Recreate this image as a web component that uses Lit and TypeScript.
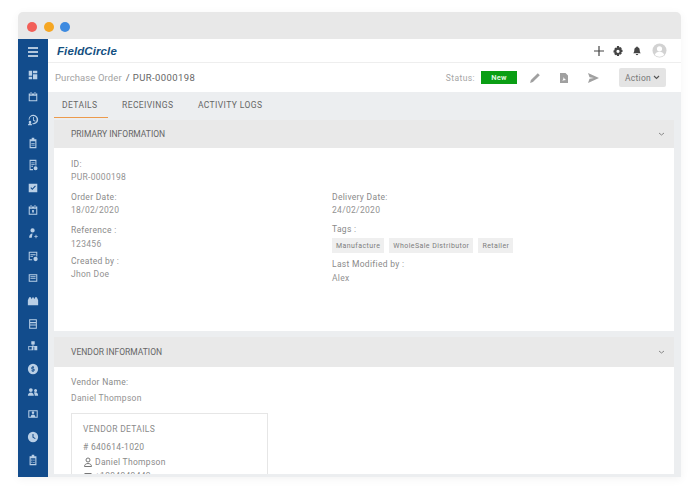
import { LitElement, html, css, svg } from 'lit';
import { customElement } from 'lit/decorators.js';

// sidebar glyphs, 14x14 box, drawn in the light blue of the menu
const sideIcons = [
  svg`<path d="M2 2h4v6H2zM7 2h5v3H7zM7 6h5v6H7zM2 9h4v3H2z"/>`,
  svg`<path fill-rule="evenodd" d="M2 3h10v9H2zM3.200 5.500v5.300h7.600V5.500zM4 1.500h1.400V4H4zM8.600 1.500H10V4H8.600z"/>`,
  svg`<path fill-rule="evenodd" d="M7.500 1a5.500 5.500 0 1 1-1 10.900V10.600a4.200 4.200 0 1 0-3.600-3.800H1.900A5.600 5.600 0 0 1 7.500 1zM7 3.500h1V7l2 1-.5.900L7 7.600zM3.500 8a1.500 1.500 0 1 1 0 3 1.500 1.500 0 0 1 0-3zM1 13c0-1.300 1-2 2.500-2S6 11.700 6 13z"/>`,
  svg`<path fill-rule="evenodd" d="M5.500 1h3v1.500H11V13H3V2.500h2.500zM4.300 5v6.700h5.400V5zM5 7h4v1H5zM5 9h4v1H5z"/>`,
  svg`<path fill-rule="evenodd" d="M3 1h8v6.500H9.800V2.200H4.200v9.600H7V13H3zM5 4h4v1H5zM5 6h4v1H5zM5 8h2v1H5zM10 8.500a2.300 2.300 0 1 1 0 4.600 2.300 2.300 0 0 1 0-4.600z"/>`,
  svg`<path fill-rule="evenodd" d="M2 2h10v10H2zM4 7l2.200 2.400L10.300 5l-.9-.8-3.200 3.500L4.900 6.200z"/>`,
  svg`<path fill-rule="evenodd" d="M2 3h10v9.500H2zM3.200 5.500v5.800h7.600V5.500zM4 1.500h1.400V4H4zM8.600 1.500H10V4H8.600zM6 7h2v3H6z"/>`,
  svg`<path d="M6.500 1.500a2.500 2.500 0 1 1 0 5 2.500 2.500 0 0 1 0-5zM2.500 12.500c0-3 1.500-5 4-5l-1 5zM10 9h1v1.500h1.500v1H11V13h-1v-1.500H8.500v-1H10z"/>`,
  svg`<path fill-rule="evenodd" d="M2 2h10v5.500h-1.200V3.200H3.200v7.600H6V12H2zM4 5h6v1H4zM4 7h3v1H4zM10 8a2.500 2.500 0 1 1 0 5 2.500 2.500 0 0 1 0-5z"/>`,
  svg`<path fill-rule="evenodd" d="M2 2.500h10v9H2zM3.200 3.700v6.600h7.600V3.700zM4 5h6v1H4zM4 7h6v1H4z"/>`,
  svg`<path d="M1 6l1.500-3.500h2L5.500 5l1-2.500h1L8.500 5l1-2.500h2L13 6v6H1z"/>`,
  svg`<path fill-rule="evenodd" d="M2.500 1.500h9v11h-9zM3.700 2.700v2.100h6.600V2.700zM3.700 6v1.500h6.600V6zM3.700 8.700v2.600h6.600V8.700z"/>`,
  svg`<path d="M5 1.500h4v3.700H7.500V7H12v5H8.500V8H7.500v4H1.500V7h5V5.200H5zM2.500 8v3h3V8z"/>`,
  svg`<path fill-rule="evenodd" d="M7 1a6 6 0 1 1 0 12A6 6 0 0 1 7 1zM6.400 3.500v1C5.400 4.700 5 5.300 5 6c0 1.900 3 1.400 3 2.300 0 .7-1.500.6-2.400 0l-.4 1c.3.200.7.400 1.200.4v.8h1.200v-.9c.9-.2 1.400-.8 1.400-1.500C9 6.300 6 6.800 6 5.900c0-.6 1.200-.6 2-.2l.3-1a3 3 0 0 0-.8-.2v-1z"/>`,
  svg`<path d="M4.500 2.500a2.200 2.200 0 1 1 0 4.400 2.200 2.200 0 0 1 0-4.400zM10 3.500a1.800 1.800 0 1 1 0 3.600 1.800 1.800 0 0 1 0-3.600zM1 11.500c0-2.600 1.400-4 3.500-4S8 8.900 8 11.500zM9 11.500c0-1.500-.2-2.700-1-3.700.6-.3 1.300-.5 2-.5 1.800 0 3 1.500 3 4.200z"/>`,
  svg`<path fill-rule="evenodd" d="M1.500 2.500h11v9h-11zM2.700 3.700v6.600h1.600C4.500 8.500 5.500 7.500 7 7.500s2.500 1 2.700 2.800h1.600V3.700zM7 4a1.500 1.500 0 1 1 0 3 1.500 1.500 0 0 1 0-3z"/>`,
  svg`<path fill-rule="evenodd" d="M7 1a6 6 0 1 1 0 12A6 6 0 0 1 7 1zM6.400 3.500v4.200l3 1.700.6-1-2.400-1.400V3.500z"/>`,
  svg`<path fill-rule="evenodd" d="M5.500 1h3v1.500H11V13H3V2.500h2.500zM4.300 5v6.700h5.400V5zM5 6.500h1.300v1.300H5zM7.200 6.800H9v.8H7.200zM5 9h1.300v1.300H5zM7.200 9.300H9v.8H7.200z"/>`,
];

@customElement('app-root')
export class AppRoot extends LitElement {
  static styles = css`
    :host {
      display: block;
      width: 694px;
      height: 495px;
      box-sizing: border-box;
      padding: 12px 13px 18px 18px;
      background: #fff;
      font-family: Roboto, "Liberation Sans", sans-serif;
      font-size: 8.5px;
      letter-spacing: 0.3px;
      color: #777;
    }
    .window {
      height: 100%;
      display: flex;
      flex-direction: column;
      border-radius: 5px 5px 0 0;
      overflow: hidden;
      box-shadow: 0 2px 10px rgba(0, 0, 0, 0.05);
    }
    .titlebar {
      flex: 0 0 27px;
      box-sizing: border-box;
      padding: 2px 0 0 9px;
      background: #e8e8e8;
      display: flex;
      align-items: center;
      gap: 6.500px;
    }
    .dot { width: 10px; height: 10px; border-radius: 50%; }
    .body { flex: 1; display: flex; min-height: 0; }
    .side {
      flex: 0 0 30px;
      background: #124c8c;
      display: flex;
      flex-direction: column;
      align-items: center;
      padding-top: 7px;
      gap: 10.650px;
    }
    .side svg { width: 12px; height: 12px; fill: #b9cfe6; display: block; }
    .side .burger { width: 14px; fill: none; stroke: #e6eef6; stroke-width: 1.300; }
    .content { flex: 1; min-width: 0; display: flex; flex-direction: column; background: #eceef0; }

    .topbar {
      flex: 0 0 23px;
      background: #fff;
      border-bottom: 1px solid #eee;
      display: flex;
      align-items: center;
      padding: 0 14px 0 9px;
    }
    .logo {
      font-family: "Liberation Sans", sans-serif;
      font-weight: 700;
      font-style: italic;
      font-size: 11.500px;
      letter-spacing: 0.1px;
      color: #14507f;
    }
    .top-icons { margin-left: auto; display: flex; align-items: center; gap: 7px; }
    .top-icons svg { display: block; fill: #444; }
    .top-icons .avatar { margin-left: 2px; }

    .subbar {
      flex: 0 0 29px;
      background: #fff;
      display: flex;
      align-items: center;
      padding: 0 15px 0 7px;
      font-size: 9.500px;
    }
    .crumb { color: #a2a2a2; letter-spacing: 0.1px; }
    .crumb-id { color: #666; margin-left: 4px; letter-spacing: 0.4px; }
    .status { margin-left: auto; color: #a5a5a5; font-size: 8.500px; letter-spacing: 0.4px; }
    .badge {
      margin-left: 6px;
      width: 36px;
      height: 13px;
      background: #0a9e14;
      color: #dff5df;
      font-size: 7.500px;
      font-weight: 700;
      display: flex;
      align-items: center;
      justify-content: center;
    }
    .actions { display: flex; align-items: center; gap: 17px; margin: 0 19px 0 12px; }
    .actions svg { display: block; fill: #a0a0a0; }
    .action-btn {
      width: 47px;
      height: 19px;
      background: #e4e4e4;
      border-radius: 2px;
      color: #777;
      display: flex;
      align-items: center;
      justify-content: center;
      gap: 2px;
      font-size: 8.500px;
    }

    .scroll { flex: 1; min-height: 0; padding: 0 7px 0 6px; }
    .tabs { height: 26px; display: flex; margin-bottom: 2px; }
    .tab {
      display: flex;
      align-items: center;
      padding: 0 10px 0 8px;
      margin-right: 6.500px;
      color: #666;
      letter-spacing: 0.4px;
    }
    .tab.on { border-bottom: 1px solid #ec9a4c; padding-top: 1px; }

    .panel-head {
      display: flex;
      align-items: center;
      justify-content: space-between;
      padding: 0 9px 0 17px;
      background: #e9e9e9;
      color: #666;
      height: 28px;
      letter-spacing: 0;
    }
    .panel-head.second { height: 30px; margin-top: 6px; }
    .panel-body { background: #fff; padding: 10px 17px 0; height: 173px; }
    .panel-body.vendor { height: 100px; padding-top: 7px; overflow: hidden; }

    .field { line-height: 13px; margin-bottom: 6px; color: #8a8a8a; }
    .field .val { color: #929292; }
    .field.first { margin-bottom: 7px; }
    .field.after-ref { margin-bottom: 4px; }
    .cols { display: grid; grid-template-columns: 261px 1fr; }
    .gap-val { line-height: 14px; }
    .tags { display: flex; gap: 5px; margin: 2px 0 4px; }
    .tag {
      height: 15px;
      padding: 0 4px;
      background: #efefef;
      font-size: 7px;
      letter-spacing: 0.42px;
      display: flex;
      align-items: center;
      color: #7d7d7d;
    }
    .tight { margin-bottom: 0; }
    .vendor-name { line-height: 16px; margin-bottom: 7px; color: #8a8a8a; }
    .vendor-name .val { color: #929292; }
    .card {
      width: 197px;
      box-sizing: border-box;
      border: 1px solid #e6e6e6;
      padding: 8px 11px;
      line-height: 15px;
      color: #8a8a8a;
    }
    .card-row { display: flex; align-items: center; gap: 2px; height: 14.500px; }
    .card-row svg { display: block; fill: none; stroke: #777; stroke-width: 1; }
  `;

  render() {
    return html`
      <div class="window">
        <div class="titlebar">
          <div class="dot" style="background:#f25f58"></div>
          <div class="dot" style="background:#f5a623"></div>
          <div class="dot" style="background:#3d8ae0"></div>
        </div>
        <div class="body">
          <div class="side">
            <svg class="burger" viewBox="0 0 14 12"><path d="M2 2h10M2 6h10M2 10h10"/></svg>
            ${sideIcons.map((p) => html`<svg viewBox="0 0 14 14">${p}</svg>`)}
          </div>
          <div class="content">
            <div class="topbar">
              <span class="logo">FieldCircle</span>
              <div class="top-icons">
                <svg width="12" height="12" viewBox="0 0 12 12"><path d="M5.400 1h1.200v4.400H11v1.200H6.600V11H5.400V6.600H1V5.400h4.400z"/></svg>
                <svg width="12" height="12" viewBox="0 0 12 12"><path fill-rule="evenodd" d="M5 1h2l.3 1.400 1-.5 1.500 1.400-.6 1 1.300.6v2l-1.300.4.6 1.100-1.500 1.400-1-.6L7 11H5l-.3-1.300-1 .6-1.500-1.400.6-1.100L1.500 7.500v-2l1.300-.6-.6-1 1.500-1.400 1 .5zM6 4.700a1.600 1.600 0 1 0 0 3.200 1.600 1.600 0 0 0 0-3.200z"/></svg>
                <svg width="12" height="12" viewBox="0 0 12 12"><path d="M6 1.500c.5 0 .8.300.8.700C8.200 2.600 8.700 3.700 8.700 5.200c0 1.700.6 2.400 1.100 3H2.200c.5-.6 1.100-1.300 1.100-3 0-1.500.5-2.600 1.900-3 0-.4.300-.7.800-.7zM4.800 9h2.400c0 .7-.5 1.200-1.200 1.200S4.800 9.700 4.800 9z"/></svg>
                <svg class="avatar" width="15" height="15" viewBox="0 0 15 15"><circle cx="7.500" cy="7.500" r="7" fill="#d2d2d2"/><circle cx="7.500" cy="5.800" r="2.600" fill="#fff"/><path d="M2.800 12c.6-2.200 2.500-3.200 4.700-3.200s4.100 1 4.700 3.200a7 7 0 0 1-9.400 0z" fill="#fff"/></svg>
              </div>
            </div>
            <div class="subbar">
              <span class="crumb">Purchase Order</span>
              <span class="crumb-id">/ PUR-0000198</span>
              <span class="status">Status:</span>
              <span class="badge">New</span>
              <div class="actions">
                <svg width="12" height="12" viewBox="0 0 12 12"><path d="M8.800 1.200l2 2-6.900 6.900-2.800.8.800-2.800z"/></svg>
                <svg width="12" height="12" viewBox="0 0 12 12"><path fill-rule="evenodd" d="M2 1h5.500L10 3.500V11H2zM4 8.800c1-.6 1.500-2 1.700-3.800.5 1.500 1.300 2.600 2.500 3-1.400 0-2.800.2-4.200.8z"/></svg>
                <svg width="13" height="12" viewBox="0 0 13 12"><path d="M1 1l11 5-11 5 1.500-4.200L7 6 2.500 5.200z"/></svg>
              </div>
              <div class="action-btn">
                Action
                <svg width="7" height="5" viewBox="0 0 7 5"><path d="M1 1l2.500 2.500L6 1" fill="none" stroke="#555" stroke-width="1.100"/></svg>
              </div>
            </div>
            <div class="scroll">
              <div class="tabs">
                <div class="tab on">DETAILS</div>
                <div class="tab">RECEIVINGS</div>
                <div class="tab">ACTIVITY LOGS</div>
              </div>
              <div class="panel-head">
                <span>PRIMARY INFORMATION</span>
                <svg width="7" height="5" viewBox="0 0 7 5"><path d="M1 1l2.500 2L6 1" fill="none" stroke="#888" stroke-width="1"/></svg>
              </div>
              <div class="panel-body">
                <div class="field first">ID:<br /><span class="val">PUR-0000198</span></div>
                <div class="cols">
                  <div>
                    <div class="field">Order Date:<br /><span class="val">18/02/2020</span></div>
                    <div class="field gap-val after-ref">Reference :<br /><span class="val">123456</span></div>
                    <div class="field">Created by :<br /><span class="val">Jhon Doe</span></div>
                  </div>
                  <div>
                    <div class="field">Delivery Date:<br /><span class="val">24/02/2020</span></div>
                    <div class="field tight">Tags :</div>
                    <div class="tags">
                      <span class="tag">Manufacture</span>
                      <span class="tag">WholeSale Distributor</span>
                      <span class="tag">Retailer</span>
                    </div>
                    <div class="field gap-val">Last Modified by :<br /><span class="val">Alex</span></div>
                  </div>
                </div>
              </div>
              <div class="panel-head second">
                <span>VENDOR INFORMATION</span>
                <svg width="7" height="5" viewBox="0 0 7 5"><path d="M1 1l2.500 2L6 1" fill="none" stroke="#888" stroke-width="1"/></svg>
              </div>
              <div class="panel-body vendor">
                <div class="vendor-name">Vendor Name:<br /><span class="val">Daniel Thompson</span></div>
                <div class="card">
                  <div>VENDOR DETAILS</div>
                  <div style="margin-top:3px"># 640614-1020</div>
                  <div class="card-row">
                    <svg width="10" height="10" viewBox="0 0 10 10"><circle cx="5" cy="3" r="2"/><path d="M1.500 9.500c0-2 1.500-3 3.500-3s3.500 1 3.500 3z"/></svg>
                    Daniel Thompson
                  </div>
                  <div class="card-row">
                    <svg width="10" height="10" viewBox="0 0 10 10"><rect x="2" y="1.500" width="6" height="7.500"/></svg>
                    +1334343443
                  </div>
                </div>
              </div>
            </div>
          </div>
        </div>
      </div>
    `;
  }
}
